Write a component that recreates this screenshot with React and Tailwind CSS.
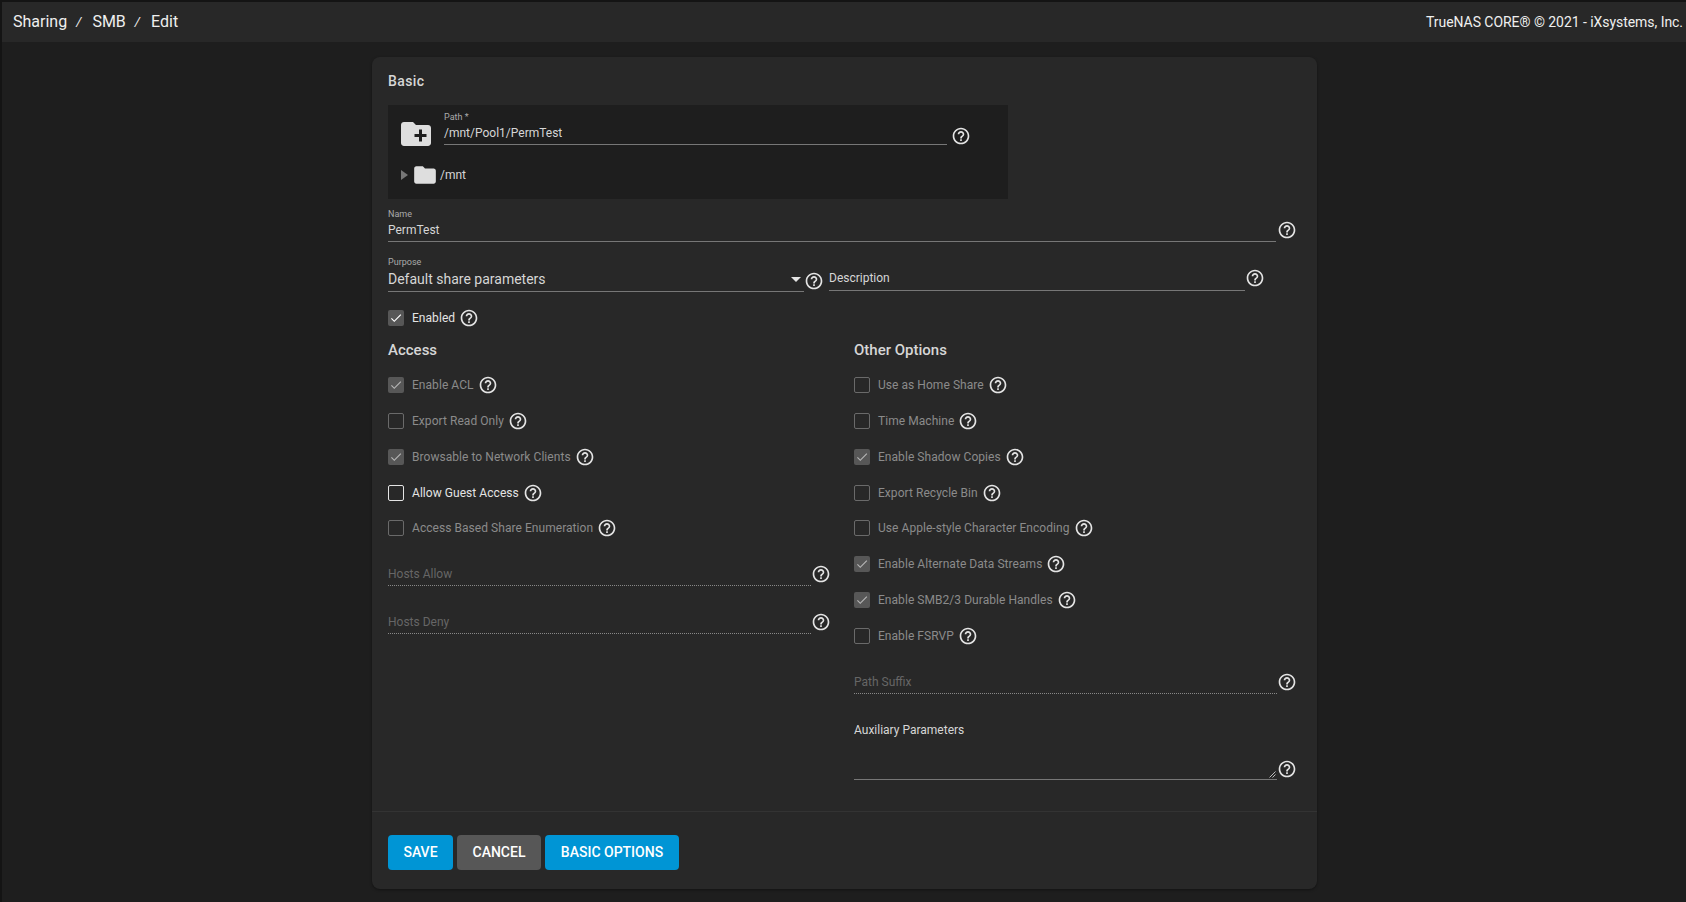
import React from 'react';
import { MdHelpOutline, MdCreateNewFolder, MdFolder, MdCheck } from 'react-icons/md';

const Help = ({ className = '' }) => (
  <MdHelpOutline size={20} className={`shrink-0 text-[#e4e4e4] ${className}`} />
);

const Check = ({ label, checked, active, className = '' }) => (
  <div className={`flex items-center h-[20px] ${className}`}>
    <span
      className={`w-[16px] h-[16px] rounded-[2px] flex items-center justify-center shrink-0 ${
        checked ? 'bg-[#575757]' : active ? 'border border-[#e4e4e4]' : 'border border-[#6a6a6a]'
      }`}
    >
      {checked && <MdCheck size={14} className={active ? 'text-white' : 'text-[#b5b5b5]'} />}
    </span>
    <span className={`ml-[8px] text-[12px] tracking-[0.05px] ${active ? 'text-[#e4e4e4]' : 'text-[#8b8b8b]'}`}>{label}</span>
    <Help className="ml-[4px]" />
  </div>
);

const Placeholder = ({ label, className = '' }) => (
  <div className={`flex items-start ${className}`}>
    <div className="flex-1 h-[24px] border-b border-dotted border-[#888] text-[12px] leading-[24px] text-[#666]">
      {label}
    </div>
    <Help className="mt-[2px]" />
  </div>
);

const access = [
  ['Enable ACL', true],
  ['Export Read Only', false],
  ['Browsable to Network Clients', true],
  ['Allow Guest Access', false, true],
  ['Access Based Share Enumeration', false],
];

const other = [
  ['Use as Home Share', false],
  ['Time Machine', false],
  ['Enable Shadow Copies', true],
  ['Export Recycle Bin', false],
  ['Use Apple-style Character Encoding', false],
  ['Enable Alternate Data Streams', true],
  ['Enable SMB2/3 Durable Handles', true],
  ['Enable FSRVP', false],
];

export default function App() {
  return (
    <div className="h-[902px] overflow-hidden bg-[#141414] pt-[2px] pl-[2px] font-['Roboto',sans-serif] text-[#e4e4e4]">
      <div className="h-full bg-[#1e1e1e]">
        {/* Top bar */}
        <div className="h-[40px] bg-[#282828] flex items-center justify-between pl-[11px] pr-[3px]">
          <div className="flex items-center text-[16px] text-[#efefef]">
            <span>Sharing</span>
            <span className="italic text-[13px] ml-[9px] mr-[11px]">/</span>
            <span>SMB</span>
            <span className="italic text-[13px] ml-[9px] mr-[11px]">/</span>
            <span>Edit</span>
          </div>
          <div className="text-[14px] tracking-[-0.05px] text-[#efefef]">TrueNAS CORE® © 2021 - iXsystems, Inc.</div>
        </div>

        <div className="flex justify-center pt-[15px] pl-[1px]">
          <div className="w-[945px] h-[832px] bg-[#282828] rounded-[8px] shadow-[0_1px_3px_rgba(0,0,0,0.4)] flex flex-col">
            <div className="flex-1 pl-[16px] pr-[20px] pt-[16px]">
              <h3 className="text-[14px] font-medium leading-[16px] text-[#d6d6d6] tracking-[0.4px]">Basic</h3>

              {/* Path picker */}
              <div className="mt-[16px] w-[620px] h-[94px] bg-[#1e1e1e] pl-[12px] pt-[6px]">
                <div className="flex items-start">
                  <MdCreateNewFolder size={36} className="text-[#dedede] mt-[5px] -ml-[2px]" />
                  <div className="ml-[10px] w-[503px]">
                    <div className="text-[9px] leading-[12px] text-[#aaa]">Path *</div>
                    <div className="h-[22px] border-b border-[#777] text-[12px] leading-[21px] text-[#d6d6d6]">
                      /mnt/Pool1/PermTest
                    </div>
                  </div>
                  <Help className="ml-[4px] mt-[15px]" />
                </div>
                <div className="flex items-center mt-[10px] text-[12px] text-[#d6d6d6]">
                  <span className="w-0 h-0 ml-[1px] border-y-[5px] border-y-transparent border-l-[7px] border-l-[#777]" />
                  <MdFolder size={26} className="text-[#dedede] ml-[4px]" />
                  <span className="ml-[2px]">/mnt</span>
                </div>
              </div>

              {/* Name */}
              <div className="mt-[9px] flex items-start">
                <div className="flex-1">
                  <div className="text-[9px] leading-[12px] text-[#aaa]">Name</div>
                  <div className="h-[22px] border-b border-[#777] text-[12px] leading-[20px] text-[#d6d6d6]">PermTest</div>
                </div>
                <Help className="ml-[1px] mt-[12px]" />
              </div>

              {/* Purpose and description */}
              <div className="mt-[14px] flex items-start">
                <div className="w-[416px]">
                  <div className="text-[9px] leading-[12px] text-[#aaa]">Purpose</div>
                  <div className="h-[24px] border-b border-[#777] flex items-center justify-between text-[14px] text-[#d6d6d6]">
                    <span>Default share parameters</span>
                    <span className="w-0 h-0 mr-[3px] border-x-[5px] border-x-transparent border-t-[5px] border-t-[#e4e4e4]" />
                  </div>
                </div>
                <Help className="mt-[15px]" />
                <div className="ml-[5px] w-[416px] mt-[12px] h-[23px] border-b border-[#777] text-[12px] leading-[20px] text-[#d6d6d6]">Description</div>
                <Help className="mt-[12px]" />
              </div>

              <Check label="Enabled" checked active className="mt-[16px]" />

              <div className="grid grid-cols-[466px_1fr] mt-[14px]">
                {/* Access */}
                <div>
                  <h4 className="text-[15px] font-medium leading-[16px] text-[#d6d6d6]">Access</h4>
                  <div className="mt-[17px] flex flex-col gap-[15.85px]">
                    {access.map(([label, checked, active]) => (
                      <Check key={label} label={label} checked={checked} active={active} />
                    ))}
                  </div>
                  <div className="w-[443px]">
                    <Placeholder label="Hosts Allow" className="mt-[24px]" />
                    <Placeholder label="Hosts Deny" className="mt-[24px]" />
                  </div>
                </div>

                {/* Other options */}
                <div>
                  <h4 className="text-[15px] font-medium leading-[16px] text-[#d6d6d6]">Other Options</h4>
                  <div className="mt-[17px] flex flex-col gap-[15.85px]">
                    {other.map(([label, checked]) => (
                      <Check key={label} label={label} checked={checked} />
                    ))}
                  </div>
                  <Placeholder label="Path Suffix" className="mt-[24px]" />
                  <div className="mt-[28px] text-[12px] leading-[16px] text-[#d6d6d6]">Auxiliary Parameters</div>
                  <div className="flex items-start">
                    <div className="flex-1 h-[42px] border-b border-[#777] flex justify-end items-end">
                      <svg width="7" height="7" viewBox="0 0 7 7" className="mb-[1px] mr-[1px]">
                        <path d="M0.5 6.5 L6.5 0.5 M3.5 6.5 L6.5 3.5" stroke="#bbb" strokeWidth="1" fill="none" />
                      </svg>
                    </div>
                    <Help className="mt-[21px]" />
                  </div>
                </div>
              </div>
            </div>

            {/* Actions */}
            <div className="h-[78px] border-t border-[#333] pl-[16px] pt-[23px] flex gap-[4px] text-[14px] font-medium text-white">
              <button className="h-[35px] w-[65px] rounded-[4px] bg-[#0095d5]">SAVE</button>
              <button className="h-[35px] w-[84px] rounded-[4px] bg-[#575757]">CANCEL</button>
              <button className="h-[35px] w-[134px] rounded-[4px] bg-[#0095d5]">BASIC OPTIONS</button>
            </div>
          </div>
        </div>
      </div>
    </div>
  );
}
